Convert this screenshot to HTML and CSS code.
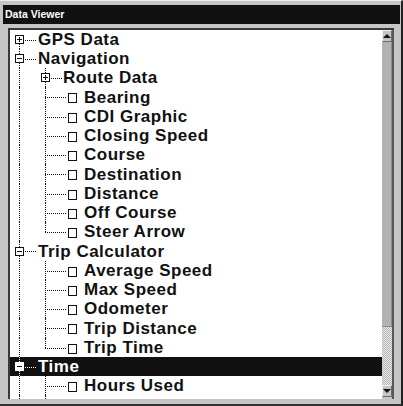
FILE: index.html
```html
<!DOCTYPE html>
<html lang="en">

<head>
    <meta charset="UTF-8">
    <meta name="viewport" content="width=device-width, initial-scale=1.0">
    <title>Data Viewer</title>
    <link rel="stylesheet" href="styles.css">
</head>

<body>
    <div class="window">
        <div class="titlebar">Data Viewer</div>
        <div class="panel">
            <div class="tree">
                <!-- level 0 -->
                <div class="row">
                    <span class="cell first"><span class="toggle plus"></span></span>
                    <span class="label">GPS Data</span>
                </div>
                <div class="row">
                    <span class="cell tee"><span class="toggle"></span></span>
                    <span class="label">Navigation</span>
                </div>
                <div class="row">
                    <span class="cell pipe"></span>
                    <span class="cell tee"><span class="toggle plus"></span></span>
                    <span class="label sub">Route Data</span>
                </div>
                <div class="row">
                    <span class="cell pipe"></span>
                    <span class="cell tee"></span>
                    <span class="stub"></span><span class="check"></span>
                    <span class="label leaf">Bearing</span>
                </div>
                <div class="row">
                    <span class="cell pipe"></span>
                    <span class="cell tee"></span>
                    <span class="stub"></span><span class="check"></span>
                    <span class="label leaf">CDI Graphic</span>
                </div>
                <div class="row">
                    <span class="cell pipe"></span>
                    <span class="cell tee"></span>
                    <span class="stub"></span><span class="check"></span>
                    <span class="label leaf">Closing Speed</span>
                </div>
                <div class="row">
                    <span class="cell pipe"></span>
                    <span class="cell tee"></span>
                    <span class="stub"></span><span class="check"></span>
                    <span class="label leaf">Course</span>
                </div>
                <div class="row">
                    <span class="cell pipe"></span>
                    <span class="cell tee"></span>
                    <span class="stub"></span><span class="check"></span>
                    <span class="label leaf">Destination</span>
                </div>
                <div class="row">
                    <span class="cell pipe"></span>
                    <span class="cell tee"></span>
                    <span class="stub"></span><span class="check"></span>
                    <span class="label leaf">Distance</span>
                </div>
                <div class="row">
                    <span class="cell pipe"></span>
                    <span class="cell tee"></span>
                    <span class="stub"></span><span class="check"></span>
                    <span class="label leaf">Off Course</span>
                </div>
                <div class="row">
                    <span class="cell pipe"></span>
                    <span class="cell end"></span>
                    <span class="stub"></span><span class="check"></span>
                    <span class="label leaf">Steer Arrow</span>
                </div>
                <div class="row">
                    <span class="cell tee"><span class="toggle"></span></span>
                    <span class="label">Trip Calculator</span>
                </div>
                <div class="row">
                    <span class="cell pipe"></span>
                    <span class="cell tee"></span>
                    <span class="stub"></span><span class="check"></span>
                    <span class="label leaf">Average Speed</span>
                </div>
                <div class="row">
                    <span class="cell pipe"></span>
                    <span class="cell tee"></span>
                    <span class="stub"></span><span class="check"></span>
                    <span class="label leaf">Max Speed</span>
                </div>
                <div class="row">
                    <span class="cell pipe"></span>
                    <span class="cell tee"></span>
                    <span class="stub"></span><span class="check"></span>
                    <span class="label leaf">Odometer</span>
                </div>
                <div class="row">
                    <span class="cell pipe"></span>
                    <span class="cell tee"></span>
                    <span class="stub"></span><span class="check"></span>
                    <span class="label leaf">Trip Distance</span>
                </div>
                <div class="row">
                    <span class="cell pipe"></span>
                    <span class="cell end"></span>
                    <span class="stub"></span><span class="check"></span>
                    <span class="label leaf">Trip Time</span>
                </div>
                <div class="row selected">
                    <span class="cell tee"><span class="toggle"></span></span>
                    <span class="label">Time</span>
                </div>
                <div class="row">
                    <span class="cell pipe"></span>
                    <span class="cell tee"></span>
                    <span class="stub"></span><span class="check"></span>
                    <span class="label leaf">Hours Used</span>
                </div>
                <div class="row">
                    <span class="cell pipe"></span>
                    <span class="cell tee"></span>
                    <span class="stub"></span><span class="check"></span>
                    <span class="label leaf">Local Time</span>
                </div>
            </div>
            <div class="scrollbar">
                <div class="btn up"><span class="arrow"></span></div>
                <div class="thumb"></div>
                <div class="track"></div>
                <div class="btn down"><span class="arrow"></span></div>
            </div>
        </div>
    </div>
</body>

</html>
```
FILE: styles.css
```css
body {
    margin: 0;
    background-color: #c6c6c6;
    font-family: "Liberation Sans", Arial, sans-serif;
    overflow: hidden;
}

.window {
    width: 403px;
    height: 406px;
    box-sizing: border-box;
    border-top: 1px solid #ececec;
    border-right: 2px solid #222;
    border-bottom: 2px solid #333;
    padding: 4px 1px 0 3px;
}

.titlebar {
    height: 19px;
    line-height: 19px;
    background-color: #111;
    color: white;
    font-size: 10.5px;
    font-weight: bold;
    padding-left: 2px;
}

/* tree panel */
.panel {
    display: flex;
    height: 371px;
    box-sizing: border-box;
    margin: 4px 6px 0 5px;
    border-top: 2px solid #3a3a3a;
    border-left: 2px solid #3a3a3a;
}

.tree {
    flex: 1;
    background-color: white;
    overflow: hidden;
    color: #111;
}

.row {
    display: flex;
    align-items: center;
    height: 19px;
    white-space: nowrap;
}

.row:nth-child(4n) {
    height: 20px;
}

.selected {
    background-color: #111;
    color: white;
}

.cell {
    position: relative;
    align-self: stretch;
    width: 26px;
    flex: none;
    display: flex;
    align-items: center;
    padding-left: 5px;
    box-sizing: border-box;
}

.cell::before,
.cell::after {
    content: "";
    position: absolute;
    left: 9px;
}

.pipe::before,
.tee::before {
    top: 0;
    bottom: 0;
    border-left: 1px dotted currentColor;
}

.end::before {
    top: 0;
    height: 50%;
    border-left: 1px dotted currentColor;
}

.first::before {
    top: 50%;
    bottom: 0;
    border-left: 1px dotted currentColor;
}

.tee::after,
.end::after,
.first::after {
    top: 50%;
    right: 0;
    border-top: 1px dotted currentColor;
}

.toggle {
    position: relative;
    z-index: 1;
    width: 9px;
    height: 9px;
    box-sizing: border-box;
    border: 1px solid #111;
    background-color: white;
    display: flex;
    align-items: center;
    justify-content: center;
}

.selected .toggle {
    border-color: white;
}

.toggle::before {
    content: "";
    width: 5px;
    height: 1px;
    background-color: #111;
}

.plus::after {
    content: "";
    position: absolute;
    left: 3px;
    top: 1px;
    width: 1px;
    height: 5px;
    background-color: #111;
}

.stub {
    width: 5px;
    align-self: stretch;
    background: linear-gradient(to right, currentColor 50%, transparent 50%) 1px 9.5px / 2px 1px repeat-x;
}

.check {
    width: 9px;
    height: 10px;
    box-sizing: border-box;
    border: 1px solid #111;
    margin: 2px 0 0 1px;
    flex: none;
}

.label {
    font-size: 17px;
    font-weight: bold;
    line-height: 19px;
    letter-spacing: 0.5px;
    margin-left: 2px;
}

.label.sub {
    margin-left: 1px;
}

.label.leaf {
    margin-left: 7px;
}

/* scrollbar */
.scrollbar {
    width: 10px;
    display: flex;
    flex-direction: column;
    border-right: 2px solid #585858;
    padding-bottom: 2px;
}

.btn {
    height: 12px;
    box-sizing: border-box;
    background-color: #c4c4c4;
    border-top: 1px solid #f0f0f0;
    border-left: 1px solid #f0f0f0;
    border-right: 1px solid #6a6a6a;
    border-bottom: 1px solid #6a6a6a;
    display: flex;
    align-items: center;
    justify-content: center;
}

.arrow {
    width: 0;
    height: 0;
    border-left: 4px solid transparent;
    border-right: 4px solid transparent;
}

.up .arrow {
    border-bottom: 4px solid #111;
}

.down .arrow {
    border-top: 4px solid #111;
}

.thumb {
    height: 285px;
    background-color: #b2b2b2;
    border-right: 1px solid #8a8a8a;
    border-bottom: 1px solid #8a8a8a;
    box-sizing: border-box;
}

.track {
    flex: 1;
    background: repeating-conic-gradient(#b8b8b8 0 25%, #e6e6e6 0 50%) 0 0 / 2px 2px;
}
```
